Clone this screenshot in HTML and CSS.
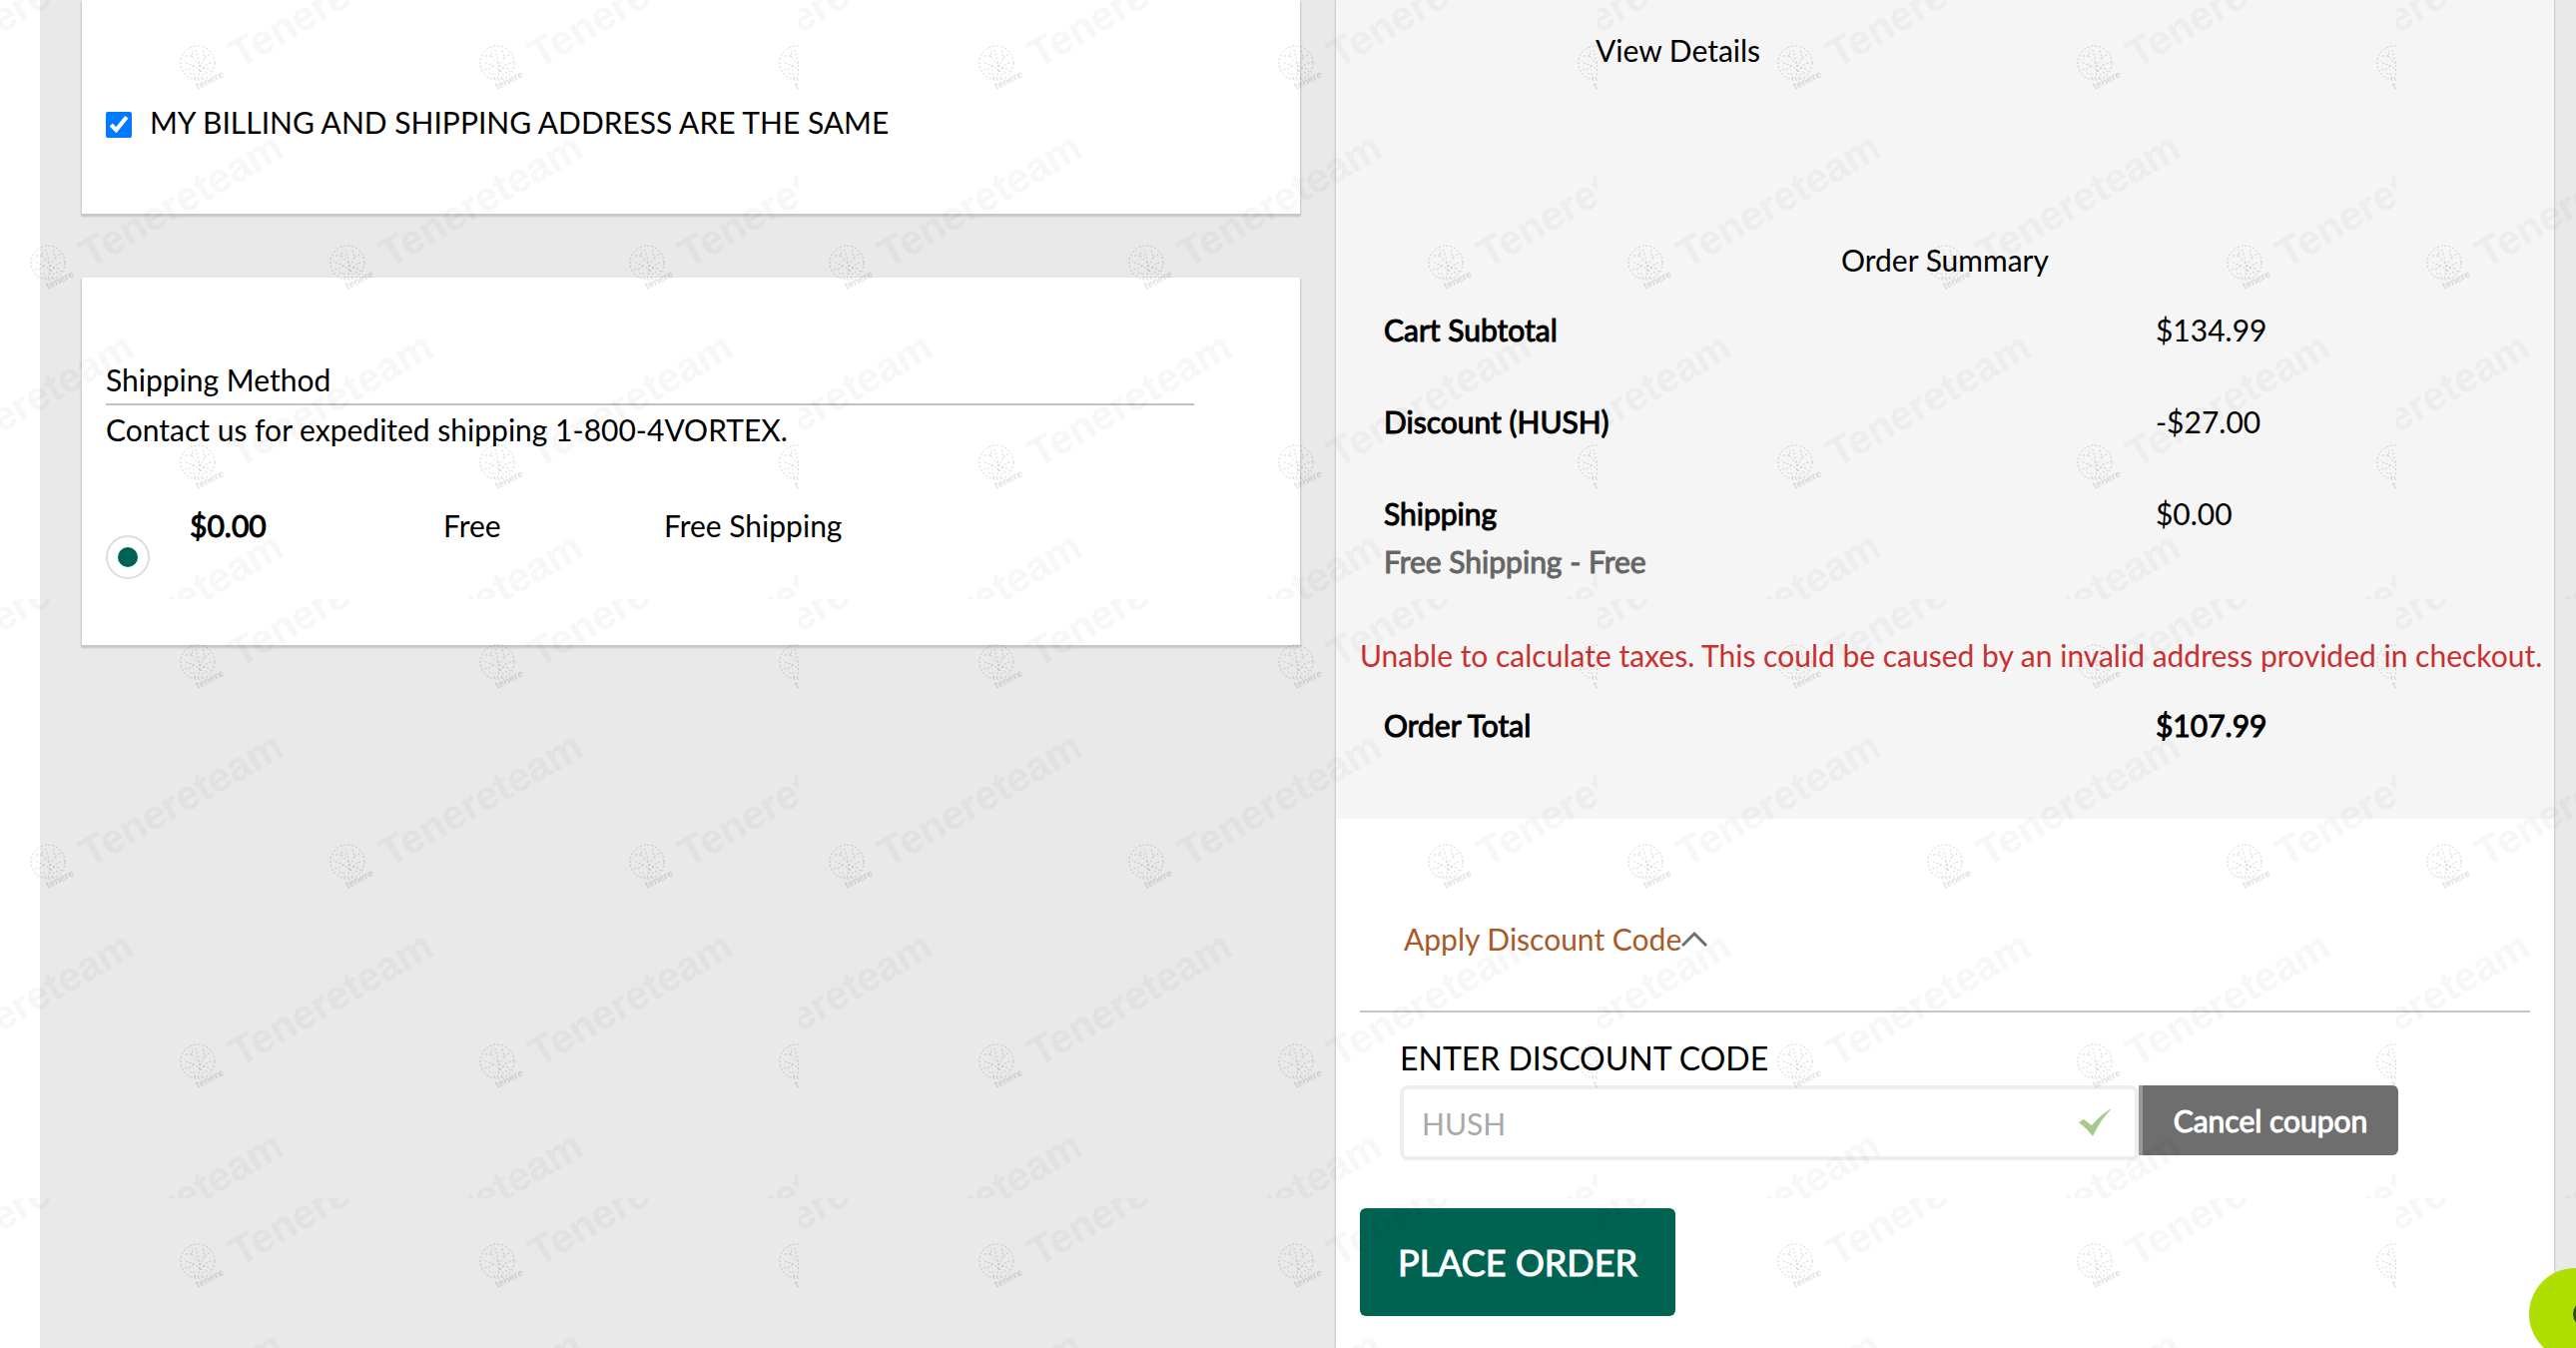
FILE: index.html
```html
<!DOCTYPE html>
<html lang="en">
<head>
    <meta charset="UTF-8">
    <meta name="viewport" content="width=device-width, initial-scale=1.0">
    <title>Checkout</title>
    <link rel="stylesheet" href="styles.css">
</head>
<body>
    <main class="checkout">
        <div class="column">
            <section class="card billing">
                <input type="checkbox" id="sameAddress" checked>
                <label for="sameAddress">MY BILLING AND SHIPPING ADDRESS ARE THE SAME</label>
            </section>

            <section class="card shipping">
                <h2>Shipping Method</h2>
                <p>Contact us for expedited shipping 1-800-4VORTEX.</p>
                <table class="methods">
                    <tr>
                        <td class="pick"><input type="radio" id="freeShipping" name="method" aria-label="Free Shipping" checked></td>
                        <td class="price strong">$0.00</td>
                        <td class="rate">Free</td>
                        <td><label for="freeShipping">Free Shipping</label></td>
                    </tr>
                </table>
            </section>
        </div>

        <aside class="sidebar">
            <section class="summary">
                <a class="details" href="#">View Details</a>
                <h2>Order Summary</h2>
                <table class="totals">
                    <tr>
                        <th class="strong">Cart Subtotal</th>
                        <td>$134.99</td>
                    </tr>
                    <tr>
                        <th class="strong">Discount (HUSH)</th>
                        <td>-$27.00</td>
                    </tr>
                    <tr>
                        <th class="strong">Shipping <span class="note">Free Shipping - Free</span></th>
                        <td>$0.00</td>
                    </tr>
                    <tr>
                        <td class="error" colspan="2">Unable to calculate taxes. This could be caused by an invalid address provided in checkout.</td>
                    </tr>
                    <tr>
                        <th class="strong">Order Total</th>
                        <td class="strong">$107.99</td>
                    </tr>
                </table>
            </section>

            <form class="discount">
                <a class="toggle" href="#discountCode">Apply Discount Code<svg width="28" height="18" viewBox="0 0 28 18"><path d="M1 16 13 4 25 16" fill="none" stroke="#6e6e6e" stroke-width="3"/></svg></a>
                <div class="coupon">
                    <label for="discountCode">ENTER DISCOUNT CODE</label>
                    <div class="coupon-row">
                        <div class="field">
                            <input type="text" id="discountCode" value="HUSH" disabled>
                            <svg class="tick" width="34" height="30" viewBox="0 0 34 30"><path d="M0 15 5 12 13 18Q22 7 33 1Q22 12 14 29Q8 21 0 15Z" fill="#a7c98c"/></svg>
                        </div>
                        <button type="button" class="cancel strong">Cancel coupon</button>
                    </div>
                </div>
                <button type="submit" class="place strong">PLACE ORDER</button>
            </form>
        </aside>
    </main>

    <button class="chat" aria-label="Chat"><span></span></button>

    <svg class="watermark" aria-hidden="true">
        <defs>
            <g id="mark">
                <g class="tree">
                    <circle r="17"/>
                    <path d="M0 16Q3 6 1-2L-2-13M1 1-6-7-5-13M-6-7-12-7M3 9Q-2 2-10 1L-14-2M-4 3-9 7-13 6M2 4 7-5 5-13M7-5 13-9M3 9Q7 1 14 0M5 5 11 6 13 9M4 16Q5 9 10 10M-3 16Q-2 9-8 11"/>
                </g>
                <text class="tag" x="0" y="27" transform="rotate(-27 0 27)">tenere</text>
                <text class="name" x="42" y="6" transform="rotate(-30 42 6)">Tenereteam</text>
            </g>
            <pattern id="tile" width="800" height="600" patternUnits="userSpaceOnUse">
                <use href="#mark" x="-102" y="63"/>
                <use href="#mark" x="198" y="63"/>
                <use href="#mark" x="498" y="63"/>
                <use href="#mark" x="798" y="63"/>
                <use href="#mark" x="-252" y="263"/>
                <use href="#mark" x="48" y="263"/>
                <use href="#mark" x="348" y="263"/>
                <use href="#mark" x="648" y="263"/>
                <use href="#mark" x="-102" y="463"/>
                <use href="#mark" x="198" y="463"/>
                <use href="#mark" x="498" y="463"/>
                <use href="#mark" x="798" y="463"/>
                <use href="#mark" x="48" y="663"/>
                <use href="#mark" x="348" y="663"/>
                <use href="#mark" x="648" y="663"/>
            </pattern>
        </defs>
        <rect width="100%" height="100%" fill="url(#tile)"/>
    </svg>
</body>
</html>
```
FILE: styles.css
```css
* {
    box-sizing: border-box;
}

body {
    font-family: Lato, sans-serif;
    font-size: 30px;
    line-height: 48px;
    color: #000;
    background-color: #fff;
    margin: 0;
}

h2, p {
    font-size: 30px;
    font-weight: 400;
    margin: 0;
}

a {
    color: inherit;
    text-decoration: none;
}

input, button {
    font-family: inherit;
    font-size: 30px;
    margin: 0;
}

table {
    border-collapse: collapse;
    table-layout: fixed;
    width: 100%;
}

th, td {
    font-weight: 400;
    text-align: left;
    vertical-align: top;
    padding: 0;
}

.strong {
    -webkit-text-stroke: 1px currentColor;
}

.checkout {
    display: grid;
    grid-template-columns: 1fr 1fr;
    gap: 36px;
    min-height: 100vh;
    margin-left: 40px;
    padding: 0 22px 0 42px;
    background-color: #e9e9e9;
}

/* left column */
.card {
    background-color: #fff;
    box-shadow: 0 2px 2px 1px #c6c6c6;
    padding: 0 24px;
}

.billing {
    display: flex;
    align-items: flex-end;
    gap: 18px;
    padding-top: 98px;
    padding-bottom: 68px;
    margin-bottom: 64px;
}

.billing input {
    width: 26px;
    height: 26px;
    margin-bottom: 8px;
    accent-color: #007aff;
}

.shipping {
    padding-top: 78px;
    padding-bottom: 66px;
}

.shipping h2 {
    width: 93%;
    border-bottom: 2px solid #c1c1c1;
}

.methods {
    margin-top: 48px;
}

.methods .pick {
    width: 84px;
    padding-top: 34px;
}

.methods .price {
    width: 254px;
}

.methods .rate {
    width: 221px;
}

.methods input {
    appearance: none;
    display: block;
    width: 44px;
    height: 44px;
    border: 2px solid #ddd;
    border-radius: 50%;
    padding: 10px;
    background: #006351 content-box;
}

.methods input::before {
    content: "";
    display: block;
}

/* right column */
.sidebar {
    background-color: #fff;
    box-shadow: 0 0 2px 1px #c6c6c6;
}

.summary {
    background-color: #f5f5f5;
    padding: 26px 24px 48px;
}

.details {
    display: block;
    width: fit-content;
    margin: 0 0 162px 236px;
}

.summary h2 {
    text-align: center;
}

.totals th,
.totals td {
    padding: 22px 0;
}

.totals th {
    width: 68%;
    padding-left: 24px;
}

.totals .note {
    display: block;
    color: #666;
}

.totals .error {
    color: #c93030;
    padding-top: 24px;
    padding-bottom: 0;
    white-space: nowrap;
}

.discount {
    padding: 96px 24px 30px;
}

.toggle {
    display: flex;
    align-items: center;
    padding-left: 44px;
    padding-bottom: 48px;
    border-bottom: 2px solid #c6c6c6;
    color: #a85a28;
}

.coupon {
    padding: 22px 132px 0 40px;
    margin-bottom: 48px;
}

.coupon label {
    display: block;
    font-size: 32px;
    margin-bottom: 3px;
}

.coupon-row {
    display: flex;
    align-items: flex-start;
}

.field {
    flex: 1;
    position: relative;
}

.field input {
    display: block;
    width: 100%;
    height: 75px;
    padding: 0 18px;
    border: 4px solid #eee;
    border-radius: 8px;
    background-color: #fff;
    color: #a9a9a9;
}

/* tick sits over the right end of the input */
.tick {
    position: absolute;
    right: 26px;
    top: 22px;
}

.cancel {
    width: 260px;
    height: 70px;
    border: 0;
    border-left: 4px solid #999;
    border-radius: 0 6px 6px 0;
    background-color: #6e6e6e;
    color: #fff;
}

.place {
    width: 316px;
    height: 108px;
    border: 0;
    border-radius: 6px;
    background-color: #006351;
    color: #fff;
    font-size: 36px;
}

.chat {
    position: fixed;
    right: -45px;
    bottom: -12px;
    width: 92px;
    height: 92px;
    padding: 0;
    border: 0;
    border-radius: 50%;
    background-color: #aedf00;
}

.chat span {
    display: block;
    width: 20px;
    height: 24px;
    margin-left: 44px;
    border-radius: 50%;
    background-color: #304a08;
}

/* watermark over the whole page */
.watermark {
    position: fixed;
    inset: 0;
    width: 100%;
    height: 100%;
    pointer-events: none;
}

.watermark text {
    font-family: "Liberation Sans", sans-serif;
    font-weight: 700;
}

.watermark .name {
    font-size: 41px;
    fill: rgba(0, 0, 0, 0.03);
}

.watermark .tag {
    font-size: 10px;
    fill: rgba(0, 0, 0, 0.12);
}

.watermark .tree {
    fill: none;
    stroke: rgba(0, 0, 0, 0.16);
    stroke-dasharray: 2 2;
}
```
